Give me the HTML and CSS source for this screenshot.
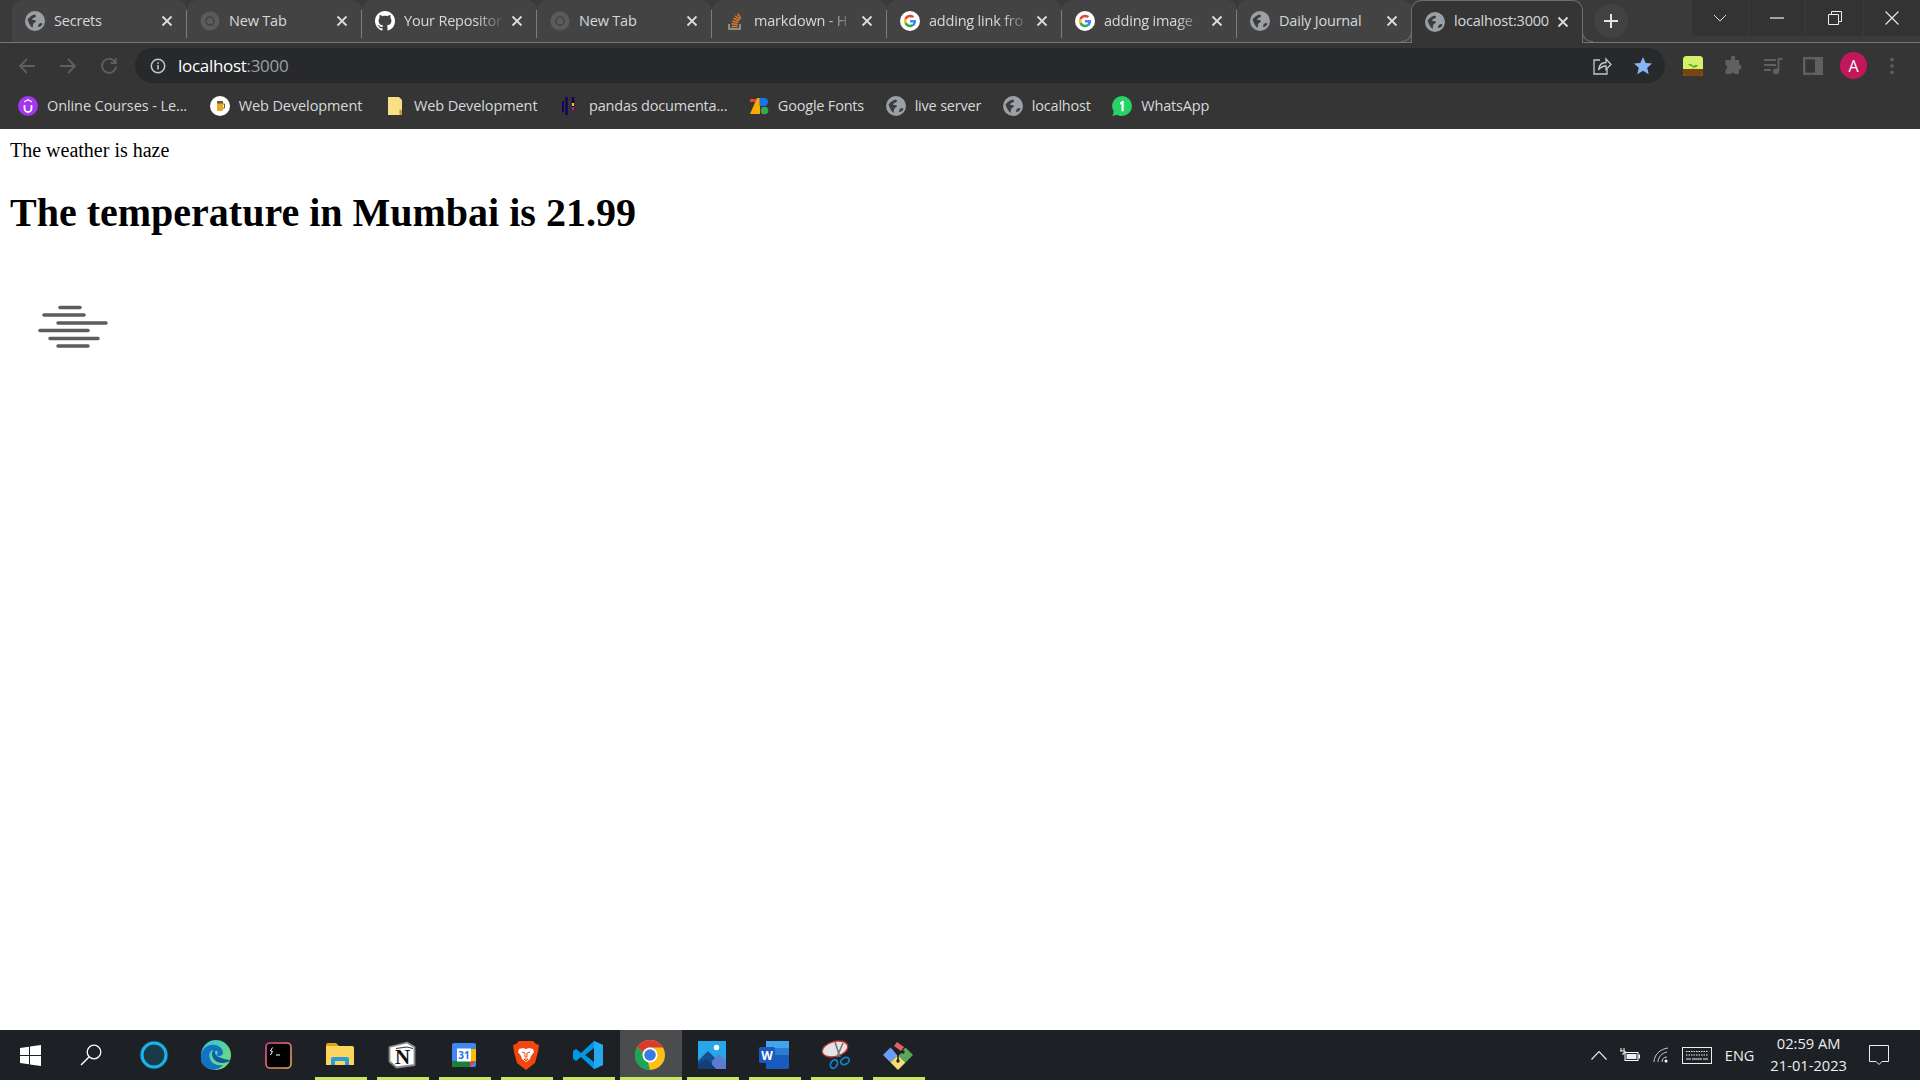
FILE: index.html
```html
<!DOCTYPE html>
<html lang="en">
<head>
  <meta charset="UTF-8">
  <meta name="viewport" content="width=device-width, initial-scale=1.0">
  <title>localhost:3000</title>
  <link rel="stylesheet" href="styles.css">
</head>
<body>
<svg class="defs" width="0" height="0">
  <symbol id="globe" viewBox="0 0 20 20">
    <circle cx="10" cy="10" r="10" fill="#9aa0a6"/>
    <path d="M2.500 8.500c2-2.500 4-4 7-5 1.500.5 2 1.500 1 2.500-1.500 1-3 1-3.500 2.500 1 1 3 0 4 1.500-.5 2-3 1.500-3 4l-.5 3c-2-1.500-4-5-5-8.500zM13 16c0-2 1-3.500 2.500-4l2 .5c-.5 2-2 3.500-4.500 3.500z" fill="#3c3d3e"/>
  </symbol>
  <symbol id="google" viewBox="0 0 20 20">
    <circle cx="10" cy="10" r="10" fill="#fff"/>
    <path d="M16 10.200c0-.5 0-.9-.1-1.300H10v2.500h3.400c-.2.8-.6 1.400-1.300 1.900l2 1.600c1.200-1.100 1.900-2.700 1.900-4.700z" fill="#4285f4"/>
    <path d="M10 16.200c1.700 0 3.100-.6 4.100-1.500l-2-1.600c-.5.400-1.200.6-2.100.6-1.600 0-3-1.100-3.500-2.600l-2 1.600c1 2 3.100 3.500 5.500 3.500z" fill="#34a853"/>
    <path d="M6.500 11.100c-.3-.8-.3-1.500 0-2.300l-2-1.600c-.9 1.700-.9 3.800 0 5.500z" fill="#fbbc05"/>
    <path d="M10 6.200c.9 0 1.700.3 2.400.9l1.800-1.800C13.100 4.300 11.700 3.800 10 3.800c-2.400 0-4.500 1.400-5.500 3.400l2 1.600C7 7.300 8.400 6.200 10 6.200z" fill="#ea4335"/>
  </symbol>
  <symbol id="chrome-dim" viewBox="0 0 20 20">
    <circle cx="10" cy="10" r="9.500" fill="#5a5b5c"/>
    <circle cx="10" cy="10" r="4.800" fill="#434343"/>
    <circle cx="10" cy="10" r="3.200" fill="#5a5b5c"/>
  </symbol>
  <symbol id="close" viewBox="0 0 12 12">
    <path d="M1.500 1.500l9 9M10.500 1.500l-9 9" stroke="#dcdcdc" stroke-width="1.800" fill="none"/>
  </symbol>
</svg>

<div class="tabstrip">
  <div class="tabs">
    <div class="tab"><svg class="favicon"><use href="#globe"/></svg><span class="tab-title">Secrets</span><svg class="tab-close"><use href="#close"/></svg></div>
    <div class="tab"><svg class="favicon"><use href="#chrome-dim"/></svg><span class="tab-title">New Tab</span><svg class="tab-close"><use href="#close"/></svg></div>
    <div class="tab">
      <svg class="favicon" viewBox="0 0 16 16"><path fill="#fff" d="M8 0C3.580 0 0 3.580 0 8c0 3.540 2.290 6.530 5.470 7.590.4.070.55-.17.550-.38 0-.19-.01-.82-.01-1.490-2.010.37-2.530-.49-2.690-.94-.09-.23-.48-.94-.82-1.130-.28-.15-.68-.52-.01-.53.630-.01 1.080.58 1.230.82.720 1.210 1.870.87 2.330.66.070-.52.280-.87.510-1.070-1.780-.2-3.640-.89-3.640-3.950 0-.87.310-1.590.820-2.150-.08-.2-.36-1.020.08-2.120 0 0 .67-.21 2.200.82.640-.18 1.320-.27 2-.27s1.360.09 2 .27c1.530-1.040 2.200-.82 2.200-.82.440 1.100.16 1.920.08 2.120.51.560.82 1.270.82 2.150 0 3.070-1.870 3.750-3.650 3.950.29.250.54.730.54 1.480 0 1.070-.01 1.930-.01 2.200 0 .21.150.46.550.38A8.013 8.013 0 0016 8c0-4.420-3.580-8-8-8z"/></svg>
      <span class="tab-title fade">Your Repositor</span><svg class="tab-close"><use href="#close"/></svg>
    </div>
    <div class="tab"><svg class="favicon"><use href="#chrome-dim"/></svg><span class="tab-title">New Tab</span><svg class="tab-close"><use href="#close"/></svg></div>
    <div class="tab">
      <svg class="favicon" viewBox="0 0 20 20"><path d="M4 13v5h11v-5" fill="none" stroke="#a8a29a" stroke-width="1.500"/><path d="M6.500 15.500h6M6.700 12.800l6 .6M7.300 10l5.800 1.600M8.500 7.200l5.300 2.900M10.300 4.700l4.500 4M12.800 2.700l3 5" stroke="#e87a24" stroke-width="1.500" fill="none"/></svg>
      <span class="tab-title fade">markdown - H</span><svg class="tab-close"><use href="#close"/></svg>
    </div>
    <div class="tab"><svg class="favicon"><use href="#google"/></svg><span class="tab-title fade">adding link fro</span><svg class="tab-close"><use href="#close"/></svg></div>
    <div class="tab"><svg class="favicon"><use href="#google"/></svg><span class="tab-title fade">adding image</span><svg class="tab-close"><use href="#close"/></svg></div>
    <div class="tab"><svg class="favicon"><use href="#globe"/></svg><span class="tab-title">Daily Journal</span><svg class="tab-close"><use href="#close"/></svg></div>
    <div class="tab tab-active"><svg class="favicon"><use href="#globe"/></svg><span class="tab-title">localhost:3000</span><svg class="tab-close"><use href="#close"/></svg></div>
  </div>
  <div class="new-tab">
    <svg width="16" height="16" viewBox="0 0 16 16"><path d="M8 1v14M1 8h14" stroke="#e4e4e4" stroke-width="2"/></svg>
  </div>
  <div class="win-controls">
    <div class="win-btn"><svg width="14" height="8" viewBox="0 0 14 8"><path d="M1 1l6 6 6-6" stroke="#ddd" fill="none"/></svg></div>
    <div class="win-btn"><svg width="14" height="2" viewBox="0 0 14 2"><path d="M0 1h14" stroke="#eee" stroke-width="1.200"/></svg></div>
    <div class="win-btn"><svg width="14" height="14" viewBox="0 0 14 14"><path d="M.5 3.500h10v10H.5zM3.500 3.500v-3h10v10h-3" stroke="#eee" fill="none"/></svg></div>
    <div class="win-btn"><svg width="14" height="14" viewBox="0 0 14 14"><path d="M.5.500l13 13M13.500.500l-13 13" stroke="#eee" stroke-width="1.100"/></svg></div>
  </div>
</div>

<div class="toolbar">
  <div class="nav-btns">
    <svg width="18" height="18" viewBox="0 0 18 18"><path d="M17 9H2M9 2L2 9l7 7" stroke="#5e5f60" stroke-width="1.800" fill="none"/></svg>
    <svg width="18" height="18" viewBox="0 0 18 18"><path d="M1 9h15M9 2l7 7-7 7" stroke="#5e5f60" stroke-width="1.800" fill="none"/></svg>
    <svg width="18" height="18" viewBox="0 0 18 18"><path d="M15.200 5.500A7 7 0 1 0 16 9.500M15.800 1v5.200h-5.200" stroke="#5e5f60" stroke-width="1.800" fill="none"/></svg>
  </div>
  <div class="omnibox">
    <svg width="16" height="16" viewBox="0 0 16 16"><circle cx="8" cy="8" r="6.700" stroke="#c4c7c9" stroke-width="1.500" fill="none"/><path d="M8 7v4.500M8 4.200v1.600" stroke="#c4c7c9" stroke-width="1.600"/></svg>
    <span class="url">localhost<span class="url-port">:3000</span></span>
    <div class="omni-right">
      <svg width="20" height="20" viewBox="0 0 20 20"><path d="M8 4H2v14h13v-5" stroke="#c4c7c9" stroke-width="1.300" fill="none"/><path d="M6.500 14c.5-5 3.500-7.500 7.500-7.500V3l5 5.500-5 5V10c-3 0-5.500 1-7.500 4z" stroke="#c4c7c9" stroke-width="1.300" fill="none"/></svg>
      <svg width="20" height="20" viewBox="0 0 20 20"><path d="M10 1l2.700 6 6.300.6-4.800 4.200 1.500 6.400L10 14.800l-5.700 3.400 1.500-6.400L1 7.600 7.300 7z" fill="#8ab4f8"/></svg>
    </div>
  </div>
  <div class="ext-icons">
    <svg width="20" height="20" viewBox="0 0 20 20"><rect width="20" height="20" rx="3.500" fill="#d4f06a"/><path d="M0 13h20v3.500a3.500 3.500 0 0 1-3.500 3.500h-13A3.500 3.500 0 0 1 0 16.500z" fill="#7a4310"/><path d="M10 13v-3M10 10.500C8 9.500 6.500 9.500 5.500 8.500c2-.5 4 0 4.500 2zM10 11c1-1.500 2.500-2 4.500-1.500-1 1.500-2.500 2-4.500 1.500z" stroke="#5d9a1e" fill="#5d9a1e" stroke-width=".5"/></svg>
    <svg width="20" height="20" viewBox="0 0 20 20"><path d="M8 1.500a2 2 0 0 1 4 0V4h4v4.500a2.300 2.300 0 0 1 0 5V18h-4.500a2.300 2.300 0 0 0-4 0H2.500v-4.500a2.300 2.300 0 0 0 0-4.500V4H8z" fill="#5f6061"/></svg>
    <svg width="20" height="20" viewBox="0 0 20 20"><path d="M1 4h12M1 9h12M1 14h7" stroke="#5f6061" stroke-width="1.800"/><path d="M15.500 15V3h4" stroke="#5f6061" stroke-width="1.800" fill="none"/><circle cx="13" cy="15.500" r="3" fill="#5f6061"/></svg>
    <svg width="20" height="20" viewBox="0 0 20 20"><rect x="1.200" y="2.200" width="17.600" height="15.600" stroke="#5f6061" stroke-width="2.400" fill="none"/><rect x="12" y="2" width="7" height="16" fill="#5f6061"/></svg>
    <div class="avatar">A</div>
    <svg class="menu-dots" width="6" height="20" viewBox="0 0 6 20"><circle cx="3" cy="3.500" r="1.800" fill="#5f6061"/><circle cx="3" cy="10" r="1.800" fill="#5f6061"/><circle cx="3" cy="16.500" r="1.800" fill="#5f6061"/></svg>
  </div>
</div>

<div class="bookmarks">
  <div class="bm">
    <svg class="favicon" viewBox="0 0 20 20"><circle cx="10" cy="10" r="10" fill="#a435f0"/><path d="M6.500 9v3.500a3.500 3.500 0 0 0 7 0V9" stroke="#fff" stroke-width="1.800" fill="none"/><path d="M10 3l4 2.300v1.300l-4-2.200-4 2.200V5.300z" fill="#fff"/></svg>
    <span>Online Courses - Le...</span>
  </div>
  <div class="bm">
    <svg class="favicon" viewBox="0 0 20 20"><circle cx="10" cy="10" r="10" fill="#fff"/><rect x="7" y="6" width="6" height="9" rx="1" fill="#e8a820"/><rect x="7" y="5" width="6" height="2.500" fill="#6b5a3a"/><path d="M13 8h1.500v4H13" stroke="#6b5a3a" fill="none"/></svg>
    <span>Web Development</span>
  </div>
  <div class="bm">
    <svg class="favicon" viewBox="0 0 20 20"><path d="M3 1h11l3 3v13l-1 2H3z" fill="#fbdf85"/><path d="M14.500 13.500V19h2.500v-5z" fill="#c99a2e"/></svg>
    <span>Web Development</span>
  </div>
  <div class="bm">
    <svg class="favicon" viewBox="0 0 20 20"><path d="M6.500 1v18M13 1v13" stroke="#150458" stroke-width="2.500"/><path d="M3 5v11" stroke="#150458" stroke-width="2"/><rect x="12" y="7" width="2" height="3" fill="#ffca00"/><rect x="12" y="11" width="2" height="3" fill="#e70488"/></svg>
    <span>pandas documenta...</span>
  </div>
  <div class="bm">
    <svg class="favicon" viewBox="0 0 20 20"><path d="M1 18L8 2h3v16z" fill="#f9ab00"/><rect x="10.500" y="2" width="4" height="8" fill="#1a73e8"/><circle cx="15" cy="6" r="4" fill="#1a73e8"/><path d="M1 3h6v3H1z" fill="#ea4335"/><circle cx="15.500" cy="14.500" r="3.800" fill="#34a853"/></svg>
    <span>Google Fonts</span>
  </div>
  <div class="bm"><svg class="favicon"><use href="#globe"/></svg><span>live server</span></div>
  <div class="bm"><svg class="favicon"><use href="#globe"/></svg><span>localhost</span></div>
  <div class="bm">
    <svg class="favicon" viewBox="0 0 20 20"><path d="M10 0a10 10 0 0 1 0 20c-1.800 0-3.400-.5-4.800-1.300L.5 20l1.300-4.600A10 10 0 0 1 10 0z" fill="#25d366"/><path d="M8 6.500l2.500-1.700h1.200v10.500H9.500V7.700L8 8.800z" fill="#fff"/></svg>
    <span>WhatsApp</span>
  </div>
</div>

<main class="page">
  <div>The weather is haze</div>
  <h1>The temperature in Mumbai is 21.99</h1>
  <svg class="weather-icon" width="125" height="125" viewBox="0 0 125 125">
    <g stroke="#5c5c5c" stroke-width="3.500" stroke-linecap="round">
      <path d="M50 44.500h20M34 52h40M48 60h48M30 67.500h48M40 75.500h48M48 83h30"/>
    </g>
  </svg>
</main>

<footer class="taskbar">
  <div class="task-icon no-run">
    <svg width="21" height="21" viewBox="0 0 21 21"><path d="M0 3l9-1.300V10H0zM10 1.500L21 0v10H10zM0 11h9v8.300L0 18zM10 11h11v10l-11-1.500z" fill="#fff"/></svg>
  </div>
  <div class="task-icon no-run search-icon">
    <svg width="22" height="22" viewBox="0 0 22 22"><circle cx="14" cy="8" r="6.800" stroke="#fff" stroke-width="1.300" fill="none"/><path d="M9 13L1 21" stroke="#fff" stroke-width="1.500"/></svg>
  </div>
  <div class="task-icon no-run">
    <svg width="30" height="30" viewBox="0 0 30 30"><circle cx="15" cy="15" r="14.500" fill="#1a3a48"/><circle cx="15" cy="15" r="12" stroke="#1ab3ec" stroke-width="3" fill="none"/></svg>
  </div>
  <div class="task-icon no-run">
    <svg width="30" height="30" viewBox="0 0 30 30"><defs><linearGradient id="edge-a" x1="0" y1="0" x2="1" y2="1"><stop offset="0" stop-color="#36c0d8"/><stop offset="1" stop-color="#7fe06a"/></linearGradient></defs><circle cx="15" cy="15" r="15" fill="url(#edge-a)"/><path d="M0 15C1 8 8 4 14 5c6 1 8 5 8 8 0 2-2 3-4 3-2 0-3-1-3-1 3-1 2-5-2-5-5 0-6 6-3 11 2 3 7 5 12 4-5 6-14 6-19 1-3-3-4-6-3-11z" fill="#1273c4"/><path d="M30 20c-1 1-5 3-9 3-5 0-10-4-10-9 0-3 2-5 4-5-2 3-1 7 3 8 4 2 8 3 12 3z" fill="#0c59a4"/></svg>
  </div>
  <div class="task-icon no-run">
    <svg width="27" height="27" viewBox="0 0 27 27"><defs><linearGradient id="term-a" x1="0" y1="0" x2="1" y2="1"><stop offset="0" stop-color="#e8409a"/><stop offset="1" stop-color="#e8b040"/></linearGradient></defs><rect x="1" y="1" width="25" height="25" rx="4" fill="#000" stroke="url(#term-a)" stroke-width="1.600"/><path d="M7.500 5.500L5.500 9l2 .5-2 3.500M11 13h4" stroke="#fff" fill="none"/></svg>
  </div>
  <div class="task-icon run">
    <svg width="28" height="24" viewBox="0 0 28 24"><path d="M0 2a2 2 0 0 1 2-2h8l3 3H0z" fill="#e3a30f"/><path d="M0 3h26a2 2 0 0 1 2 2v17H0z" fill="#fcd55f"/><path d="M5 22v-6a2 2 0 0 1 2-2h14a2 2 0 0 1 2 2v6h-4v-4H9v4z" fill="#2a9be0"/></svg>
  </div>
  <div class="task-icon run">
    <svg width="28" height="28" viewBox="0 0 28 28"><path d="M1.500 6L19 1.500l7.500 4.500v18l-18 2.500-7-6z" fill="#fff" stroke="#8a8a8a" stroke-width="1.800" stroke-linejoin="round"/><path d="M8 7.500L19 6l6 1.500" stroke="#333" fill="none"/><text x="14.500" y="23" class="notion-n">N</text></svg>
  </div>
  <div class="task-icon run">
    <svg width="24" height="24" viewBox="0 0 24 24"><rect width="24" height="24" rx="2" fill="#4285f4"/><rect x="18" y="6" width="6" height="12" fill="#fbbc04"/><rect y="18" width="18" height="6" fill="#188038"/><path d="M18 18h6l-6 6z" fill="#ea4335"/><rect x="5" y="5.500" width="14" height="13" fill="#fff"/><text x="12" y="16" class="cal-num">31</text></svg>
  </div>
  <div class="task-icon run">
    <svg width="26" height="30" viewBox="0 0 26 30"><path d="M6 1h14l3 3 3 1-1 7-3 11-9 7-9-7L1 12 0 5l3-1z" fill="#f1470f"/><path d="M6 9l4-1 3 1 3-1 4 1 1 3-3 4-1 3-4 3-4-3-1-3-3-4z" fill="#fff"/><path d="M9 12l3 1v4h2v-4l3-1M11 19h4l-2 2z" stroke="#f1470f" fill="none"/></svg>
  </div>
  <div class="task-icon run">
    <svg width="30" height="30" viewBox="0 0 30 30"><path d="M21 1l9 4v20l-9 4L8 17l-5 4-3-2v-8l3-2 5 4z" fill="#0098e6"/><path d="M21 1l9 4v20l-9 4z" fill="#25a9ef"/><path d="M21 8v14l-9-7z" fill="#202326"/></svg>
  </div>
  <div class="task-icon run active">
    <svg width="30" height="30" viewBox="0 0 30 30"><circle cx="15" cy="15" r="15" fill="#fbc116"/><path d="M15 0a15 15 0 0 1 13 7.500H15a7.500 7.500 0 0 0-7 4.800L2 7A15 15 0 0 1 15 0z" fill="#db3a2e"/><path d="M2 7l6 5.200a7.500 7.500 0 0 0 5 9.800L15 30A15 15 0 0 1 2 7z" fill="#1fa355"/><circle cx="15" cy="15" r="7.500" fill="#fff"/><circle cx="15" cy="15" r="5.800" fill="#3979e8"/></svg>
  </div>
  <div class="task-icon run">
    <svg width="28" height="28" viewBox="0 0 28 28"><rect width="28" height="28" fill="#27a7e7"/><path d="M0 20l10-10 8 8v10H0z" fill="#14508f"/><path d="M14 20l7-7 7 7v8H14z" fill="#5a7dd1"/><path d="M0 28v-5l9-5 9 10z" fill="#133f78"/><circle cx="18.500" cy="6.500" r="2.700" fill="#fff"/></svg>
  </div>
  <div class="task-icon run">
    <svg width="30" height="28" viewBox="0 0 30 28"><rect x="7" width="23" height="28" rx="1.500" fill="#185abd"/><rect x="7" width="23" height="7" fill="#41a5ee"/><rect x="7" y="7" width="23" height="7" fill="#2b7cd3"/><rect y="6" width="16" height="16" rx="1.500" fill="#185abd"/><text x="8" y="18.500" class="word-w">W</text></svg>
  </div>
  <div class="task-icon run">
    <svg width="30" height="30" viewBox="0 0 30 30"><ellipse cx="14" cy="9" rx="13" ry="7.500" transform="rotate(-15 14 9)" fill="#e4e4e4" stroke="#c2353d" stroke-width="1.300"/><path d="M14 2l5 15M22 3l-6 14" stroke="#777" stroke-width="1.600"/><ellipse cx="13" cy="24" rx="3.200" ry="4.500" transform="rotate(30 13 24)" stroke="#0c84cc" stroke-width="1.800" fill="none"/><ellipse cx="24" cy="21" rx="3.200" ry="4.500" transform="rotate(60 24 21)" stroke="#0c84cc" stroke-width="1.800" fill="none"/></svg>
  </div>
  <div class="task-icon run">
    <svg width="30" height="30" viewBox="0 0 30 30"><path d="M15 15L7.500 7.500 0 15l7.500 7.500z" fill="#6c9cf5"/><path d="M15 15l7.500 7.500L15 30l-7.500-7.500z" fill="#f6de73"/><path d="M15 15l7.500-7.500L30 15l-7.500 7.500z" fill="#57a85b"/><path d="M11 6l3-4 7 5-3 4z" fill="#e3625f"/><path d="M15 15v6M15 15l-4-5M15 15l5-4" stroke="#202326" stroke-width="1.600"/><circle cx="15" cy="21" r="1.700" fill="#202326"/><circle cx="20" cy="12" r="1.700" fill="#202326"/></svg>
  </div>
  <div class="tray">
    <svg width="16" height="10" viewBox="0 0 16 10"><path d="M.5 9.500L8 1.500l7.500 8" stroke="#eee" stroke-width="1.100" fill="none"/></svg>
    <svg width="20" height="14" viewBox="0 0 20 14"><path d="M1 0v3M4 0v3M0 3h5v2H3v2" stroke="#fff" fill="none"/><rect x="5" y="4.500" width="13" height="8" fill="none" stroke="#fff"/><rect x="6.500" y="6" width="10" height="5" fill="#eee"/><rect x="18.500" y="6.500" width="1.500" height="4" fill="#fff"/></svg>
    <svg width="16" height="16" viewBox="0 0 16 16"><path d="M1 15C1 8 7 2 15 1M5 15c0-5 4-9 9-10M9 15c0-3 2-5 5-5" stroke="#ccc" fill="none"/><circle cx="13" cy="14" r="1.500" fill="#fff"/></svg>
    <svg width="30" height="17" viewBox="0 0 30 17"><rect x=".5" y=".5" width="29" height="16" stroke="#eee" fill="none"/><path d="M4 4.500h22M4 8h22" stroke="#eee" stroke-dasharray="1.500 1"/><path d="M4 12h5M10 12h10M21 12h5" stroke="#eee"/></svg>
    <span class="tray-lang">ENG</span>
    <div class="clock"><span>02:59 AM</span><span>21-01-2023</span></div>
    <svg class="notify" width="20" height="20" viewBox="0 0 20 20"><path d="M.5.500h19v16h-6.500L10 19.500 7 16.500H.5z" stroke="#eee" fill="none"/></svg>
  </div>
</footer>
</body>
</html>
```

FILE: styles.css
```css
body {
  margin: 0;
  height: 1080px;
  display: flex;
  flex-direction: column;
  background: #fff;
  overflow: hidden;
  font-family: "Open Sans", "Noto Sans", sans-serif;
}
.defs {
  position: absolute;
}

/* tab strip */
.tabstrip {
  height: 42px;
  display: flex;
  align-items: flex-end;
  background: #3a3a3a;
  border-bottom: 1px solid #777;
  padding-left: 12px;
  flex-shrink: 0;
}
.tabs {
  display: flex;
  height: 42px;
}
.tab {
  width: 175px;
  box-sizing: border-box;
  display: flex;
  align-items: center;
  padding: 0 14px 0 13px;
  background: #434343;
  position: relative;
  border-radius: 10px 10px 0 0;
}
.tab::after {
  content: "";
  position: absolute;
  right: 0;
  top: 10px;
  bottom: 4px;
  width: 1px;
  background: #7d7d7d;
}
.tab:nth-last-child(2)::after {
  display: none;
}
.favicon {
  width: 20px;
  height: 20px;
  flex-shrink: 0;
}
.tab-title {
  flex: 1;
  margin: 0 0 2px 9px;
  font-size: 14.5px;
  letter-spacing: -0.2px;
  color: #d6d9dc;
  white-space: nowrap;
}
.fade {
  -webkit-mask-image: linear-gradient(to right, #000 72%, transparent 100%);
  mask-image: linear-gradient(to right, #000 72%, transparent 100%);
}
.tab-close {
  width: 12px;
  height: 12px;
  flex-shrink: 0;
  margin-left: 6px;
}
.tab-active {
  background: #353535;
  border: 1px solid #6e6e6e;
  border-bottom: none;
  height: 43px;
  padding: 0 13px 1px 13px;
  width: 172px;
  margin-left: -1px;
  z-index: 1;
}
.tab-active::before,
.tab-active::after {
  content: "";
  position: absolute;
  top: auto;
  bottom: 1px;
  width: 10px;
  height: 10px;
  background: #434343;
  border-bottom: 1px solid #6e6e6e;
}
.tab-active::before {
  left: -11px;
  border-right: 1px solid #6e6e6e;
  border-bottom-right-radius: 10px;
}
.tab-active::after {
  right: -11px;
  background: #3a3a3a;
  border-left: 1px solid #6e6e6e;
  border-bottom-left-radius: 10px;
}
.new-tab {
  width: 34px;
  height: 34px;
  margin: 0 0 4px 11px;
  border-radius: 50%;
  background: #424242;
  display: flex;
  align-items: center;
  justify-content: center;
}
.win-controls {
  margin-left: auto;
  align-self: flex-start;
  display: flex;
  height: 36px;
  background: #333;
}
.win-btn {
  width: 57.3px;
  display: flex;
  align-items: center;
  justify-content: center;
  border-left: 1px solid #3c3c3c;
  box-sizing: border-box;
}

/* toolbar */
.toolbar {
  height: 45px;
  display: flex;
  align-items: center;
  background: #353535;
  flex-shrink: 0;
}
.nav-btns {
  width: 135px;
  box-sizing: border-box;
  padding-left: 18px;
  display: flex;
  gap: 23px;
}
.omnibox {
  width: 1530px;
  height: 35px;
  border-radius: 18px;
  background: #28292b;
  display: flex;
  align-items: center;
  padding: 0 12px 0 15px;
  box-sizing: border-box;
}
.url {
  margin-left: 12px;
  font-size: 17px;
  letter-spacing: -0.3px;
  color: #fff;
}
.url-port {
  color: #9aa0a6;
}
.omni-right {
  margin-left: auto;
  display: flex;
  gap: 21px;
  align-items: center;
}
.ext-icons {
  display: flex;
  align-items: center;
  gap: 20px;
  padding-left: 18px;
}
.avatar {
  width: 27px;
  height: 27px;
  margin: 0 -3px;
  border-radius: 50%;
  background: #c2185b;
  color: #fff;
  font-size: 16px;
  display: flex;
  align-items: center;
  justify-content: center;
}
.menu-dots {
  margin-left: 5px;
}

/* bookmarks */
.bookmarks {
  height: 41px;
  box-sizing: border-box;
  display: flex;
  align-items: center;
  background: #353535;
  padding: 0 0 6px 18px;
  gap: 21.6px;
  flex-shrink: 0;
}
.bm {
  display: flex;
  align-items: center;
  gap: 9px;
  font-size: 14.5px;
  letter-spacing: -0.2px;
  color: #d6d9dc;
  white-space: nowrap;
}
.bm:nth-child(-n+3) {
  letter-spacing: -0.1px;
  margin-right: 1px;
}

/* page content */
.page {
  flex: 1;
  padding: 10px;
  font-family: "Liberation Serif", serif;
  font-size: 20px;
  color: #000;
}
.page h1 {
  font-size: 40px;
  margin: 27px 0;
}
.weather-icon {
  display: block;
}

/* taskbar */
.taskbar {
  height: 50px;
  display: flex;
  background: #1d2024;
  flex-shrink: 0;
}
.task-icon {
  width: 62px;
  height: 50px;
  display: flex;
  align-items: center;
  justify-content: center;
  position: relative;
  box-sizing: border-box;
  padding-right: 2px;
}
.search-icon {
  padding-right: 5px;
}
.task-icon.active {
  background: #4a4c4e;
}
.task-icon.run::after {
  content: "";
  position: absolute;
  left: 5px;
  right: 5px;
  bottom: 0;
  height: 3px;
  background: #c4e860;
}
.task-icon.active::after {
  left: 0;
  right: 0;
}
.notion-n {
  font-family: "Liberation Serif", serif;
  font-size: 21px;
  font-weight: 700;
  fill: #111;
  text-anchor: middle;
}
.cal-num {
  font-family: "Open Sans", sans-serif;
  font-size: 10px;
  font-weight: 700;
  fill: #1a73e8;
  text-anchor: middle;
}
.word-w {
  font-family: "Open Sans", sans-serif;
  font-size: 12px;
  font-weight: 700;
  fill: #fff;
  text-anchor: middle;
}
.tray {
  margin-left: auto;
  display: flex;
  align-items: center;
  gap: 13px;
  color: #eee;
  padding-right: 31px;
}
.tray-lang {
  font-size: 14.5px;
  margin-right: 3px;
}
.clock {
  display: flex;
  flex-direction: column;
  align-items: center;
  font-size: 14.7px;
  line-height: 22px;
  padding-bottom: 2px;
}
.notify {
  margin-left: 9px;
}
```
